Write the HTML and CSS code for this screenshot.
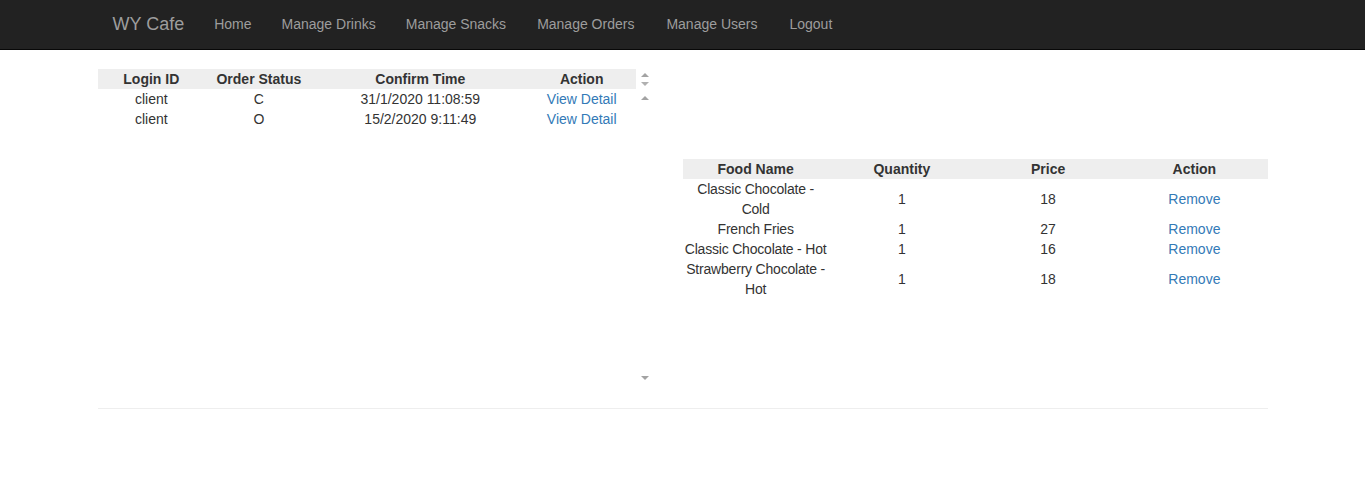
FILE: index.html
```html
<!DOCTYPE html>
<html>
<head>
<meta charset="utf-8">
<link rel="stylesheet" href="styles.css">
</head>
<body>
<nav class="navbar">
  <div class="container nav-inner">
    <a class="brand" href="#">WY Cafe</a>
    <ul class="nav">
      <li><a href="#">Home</a></li>
      <li><a href="#">Manage Drinks</a></li>
      <li><a href="#">Manage Snacks</a></li>
      <li><a href="#">Manage Orders</a></li>
      <li><a href="#">Manage Users</a></li>
      <li><a href="#">Logout</a></li>
    </ul>
  </div>
</nav>
<main class="container">
  <div class="row">
    <div class="col left">
      <div class="scroll-head">
        <table class="grid orders">
          <thead>
            <tr><th>Login ID</th><th>Order Status</th><th>Confirm Time</th><th>Action</th></tr>
          </thead>
        </table>
        <div class="bar bar-head">
          <span class="arr up"></span>
          <span class="arr down"></span>
        </div>
      </div>
      <div class="scroll-body">
        <table class="grid orders">
          <tbody>
            <tr><td>client</td><td>C</td><td>31/1/2020 11:08:59</td><td><a href="#">View Detail</a></td></tr>
            <tr><td>client</td><td>O</td><td>15/2/2020 9:11:49</td><td><a href="#">View Detail</a></td></tr>
          </tbody>
        </table>
        <div class="bar bar-body">
          <span class="arr up"></span>
          <span class="arr down"></span>
        </div>
      </div>
    </div>
    <div class="col right">
      <table class="grid cart">
        <thead>
          <tr><th>Food Name</th><th>Quantity</th><th>Price</th><th>Action</th></tr>
        </thead>
        <tbody>
          <tr><td>Classic Chocolate - Cold</td><td>1</td><td>18</td><td><a href="#">Remove</a></td></tr>
          <tr><td>French Fries</td><td>1</td><td>27</td><td><a href="#">Remove</a></td></tr>
          <tr><td>Classic Chocolate - Hot</td><td>1</td><td>16</td><td><a href="#">Remove</a></td></tr>
          <tr><td>Strawberry Chocolate - Hot</td><td>1</td><td>18</td><td><a href="#">Remove</a></td></tr>
        </tbody>
      </table>
    </div>
  </div>
  <hr class="rule">
</main>
</body>
</html>
```

FILE: styles.css
```css
* { box-sizing: border-box; }
html, body { margin: 0; padding: 0; }
body {
  font-family: "Liberation Sans", Arial, Helvetica, sans-serif;
  font-size: 14px;
  line-height: 20px;
  color: #333;
  background: #fff;
}
a { color: #337ab7; text-decoration: none; }

.container {
  width: 1170px;
  margin: 0 auto;
}

.navbar {
  background: #222;
  height: 50px;
  border-bottom: 1px solid #080808;
}
.nav-inner {
  display: flex;
  align-items: stretch;
  height: 49px;
}
.brand {
  color: #9d9d9d;
  font-size: 18px;
  line-height: 20px;
  padding: 14px 15px 15px 15px;
  height: 49px;
}
.nav {
  list-style: none;
  margin: 0;
  padding: 0;
  display: flex;
}
.nav a {
  display: block;
  color: #9d9d9d;
  padding: 14px 15px 15px 15px;
}
.nav li:nth-child(n+4) a { padding-left: 16px; padding-right: 16px; }

main.container { padding-top: 19px; }

.row { display: flex; align-items: flex-start; }
.col { width: 585px; }

.left { display: flex; flex-direction: column; }
.scroll-head, .scroll-body {
  display: flex;
  align-items: flex-start;
  width: 555px;
}
.scroll-body { height: 299px; }
.orders { width: 538px; }
.bar {
  width: 17px;
  align-self: stretch;
  position: relative;
}
.arr {
  position: absolute;
  left: 5px;
  width: 0;
  height: 0;
  border-left: 4px solid transparent;
  border-right: 4px solid transparent;
}
.arr.up { border-bottom: 4px solid #a3a3a3; }
.arr.down { border-top: 4px solid #a3a3a3; }
.bar-head .up { top: 4px; }
.bar-head .down { top: 13px; }
.bar-head .down { border-top-color: #b0b0b0; }
.bar-body .up { top: 7px; }
.bar-body .down { top: 287px; }

.grid {
  border-collapse: collapse;
  table-layout: fixed;
}
.grid th {
  background: #eee;
  font-weight: bold;
  text-align: center;
  padding: 0;
  height: 20px;
}
.grid td {
  text-align: center;
  padding: 0;
  vertical-align: middle;
}
.orders th:nth-child(1), .orders td:nth-child(1) { width: 20%; }
.orders th:nth-child(2), .orders td:nth-child(2) { width: 20%; }
.orders th:nth-child(3), .orders td:nth-child(3) { width: 40%; }
.orders th:nth-child(4), .orders td:nth-child(4) { width: 20%; }

.right { padding-top: 90px; }
.cart { width: 585px; }
.cart th, .cart td { width: 25%; }
.cart td:first-child { letter-spacing: -0.2px; }

.rule {
  margin: 20px 0 0 0;
  border: 0;
  border-top: 1px solid #eee;
  height: 0;
}
```
